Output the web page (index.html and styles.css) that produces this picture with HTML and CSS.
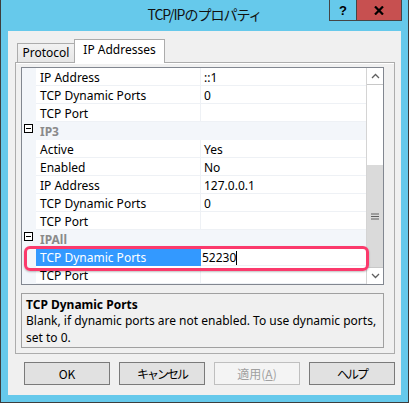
FILE: index.html
```html
<!DOCTYPE html>
<html>
<head>
<meta charset="utf-8">
<link rel="stylesheet" href="styles.css">
</head>
<body>
<div class="window">
  <div class="titlebar">
    <div class="title">TCP/IPのプロパティ</div>
    <div class="caption">
      <div class="cbtn help">?</div>
      <div class="cbtn close"><svg width="10" height="9" viewBox="0 0 10 9"><path d="M1 0.5 L9 8.5 M9 0.5 L1 8.5" stroke="#000" stroke-width="2.2" fill="none"/></svg></div>
    </div>
  </div>
  <div class="client">
    <div class="tabs">
      <div class="tab">Protocol</div>
      <div class="tab active">IP Addresses</div>
    </div>
    <div class="panel">
      <div class="grid">
        <div class="rows">
          <div class="row"><div class="m"></div><div class="n">IP Address</div><div class="v">::1</div></div>
          <div class="row"><div class="m"></div><div class="n">TCP Dynamic Ports</div><div class="v">0</div></div>
          <div class="row"><div class="m"></div><div class="n">TCP Port</div><div class="v"></div></div>
          <div class="row cat"><div class="m"><div class="box"></div></div><div class="n">IP3</div></div>
          <div class="row"><div class="m"></div><div class="n">Active</div><div class="v">Yes</div></div>
          <div class="row"><div class="m"></div><div class="n">Enabled</div><div class="v">No</div></div>
          <div class="row"><div class="m"></div><div class="n">IP Address</div><div class="v">127.0.0.1</div></div>
          <div class="row"><div class="m"></div><div class="n">TCP Dynamic Ports</div><div class="v">0</div></div>
          <div class="row"><div class="m"></div><div class="n">TCP Port</div><div class="v"></div></div>
          <div class="row cat"><div class="m"><div class="box"></div></div><div class="n">IPAll</div></div>
          <div class="row sel"><div class="m"></div><div class="n">TCP Dynamic Ports</div><div class="v">52230<span class="caret"></span></div></div>
          <div class="row"><div class="m"></div><div class="n">TCP Port</div><div class="v"></div></div>
        </div>
        <div class="sb">
          <div class="sbtn up"><svg width="9" height="6" viewBox="0 0 9 6"><path d="M1 5 L4.5 1.5 L8 5" stroke="#606060" stroke-width="1.3" fill="none"/></svg></div>
          <div class="track">
            <div class="thumb"><svg width="8" height="7" viewBox="0 0 8 7"><path d="M0 1 H8 M0 3.5 H8 M0 6 H8" stroke="#606060" stroke-width="1"/></svg></div>
          </div>
          <div class="sbtn down"><svg width="9" height="6" viewBox="0 0 9 6"><path d="M1 1 L4.5 4.5 L8 1" stroke="#606060" stroke-width="1.3" fill="none"/></svg></div>
        </div>
        <div class="annot"></div>
      </div>
      <div class="desc">
        <div class="dt">TCP Dynamic Ports</div>
        <div class="dd">Blank, if dynamic ports are not enabled. To use dynamic ports,</div>
        <div class="dd">set to 0.</div>
      </div>
    </div>
    <div class="btns">
      <div class="btn">OK</div>
      <div class="btn kana">キャンセル</div>
      <div class="btn disabled">適用(<u>A</u>)</div>
      <div class="btn kana">ヘルプ</div>
    </div>
  </div>
</div>
</body>
</html>
```

FILE: styles.css
```css
* { box-sizing: border-box; }
body { margin: 0; background: #fff; }

.window {
  width: 409px;
  height: 403px;
  background: #66c9eb;
  border: 1px solid #3d3d3d;
  border-top: none;
  padding: 0 7px 7px;
  display: flex;
  flex-direction: column;
  font-family: "Noto Sans", sans-serif;
  font-size: 12px;
  color: #000;
}

.titlebar {
  height: 31px;
  margin: 0 -7px;
  display: grid;
  grid-template-columns: 1fr auto 1fr;
  align-items: start;
  flex: none;
}
.title {
  grid-column: 2;
  font-family: "Noto Sans CJK JP", sans-serif;
  font-size: 14px;
  letter-spacing: -1px;
  line-height: 29px;
  color: #111;
}
.caption {
  grid-column: 3;
  justify-self: end;
  margin-right: 6px;
  display: flex;
  height: 21px;
  border: 1px solid #454545;
  border-top: none;
}
.cbtn {
  display: flex;
  align-items: center;
  justify-content: center;
}
.help {
  width: 27px;
  border-right: 1px solid #454545;
  font-family: "Liberation Sans", sans-serif;
  font-weight: bold;
  font-size: 13px;
}
.close {
  width: 44px;
  background: #c75050;
}

.client {
  flex: 1;
  background: #f0f0f0;
  display: flex;
  flex-direction: column;
}

.tabs {
  display: flex;
  align-items: flex-end;
  height: 23px;
  margin: 8px 0 0 9px;
  position: relative;
  z-index: 1;
  flex: none;
}
.tab {
  width: 58px;
  height: 19px;
  border: 1px solid #acacac;
  border-bottom: none;
  background: linear-gradient(#f2f2f2, #e6e6e6);
  text-align: center;
  line-height: 17px;
}
.tab.active {
  width: 91px;
  height: 24px;
  margin-left: -1px;
  margin-bottom: -1px;
  background: #fff;
  line-height: 20px;
}

.panel {
  height: 292px;
  margin: 0 6px 0 7px;
  border: 1px solid #acacac;
  box-shadow: inset 0 1px 0 #fff;
  padding: 4px 10px 5px 5px;
  display: flex;
  flex-direction: column;
  gap: 8px;
  flex: none;
}

.grid {
  height: 218px;
  border: 1px solid #828790;
  background: #fff;
  display: flex;
  position: relative;
  flex: none;
}
.rows {
  width: 344px;
  display: flex;
  flex-direction: column;
}
.row {
  display: flex;
  height: 18px;
}
.m {
  width: 14px;
  background: #f3f6fa;
  flex: none;
}
.n {
  width: 165px;
  padding: 2px 0 0 4px;
  line-height: 15px;
  border-right: 1px solid #eef1f5;
  border-bottom: 1px solid #eef1f5;
  white-space: nowrap;
  flex: none;
}
.v {
  width: 165px;
  padding: 2px 0 0 3px;
  line-height: 15px;
  border-bottom: 1px solid #eef1f5;
  white-space: nowrap;
  flex: none;
}
.cat { background: #f3f6fa; }
.cat .m {
  display: flex;
  padding: 2px 0 0 2px;
}
.box {
  width: 9px;
  height: 9px;
  border: 1px solid #000;
  background: #fff;
  display: flex;
  align-items: center;
  justify-content: center;
}
.box::before {
  content: "";
  width: 5px;
  height: 1px;
  background: #000;
}
.cat .n {
  width: 330px;
  border-right: none;
  border-bottom-color: #f3f6fa;
  font-weight: bold;
  color: #8a8a8a;
}
.sel .n {
  background: #3399ff;
  color: #fff;
  border-right-color: #3399ff;
  border-bottom-color: #3399ff;
}
.sel .v { padding-left: 1px; }
.caret {
  display: inline-block;
  width: 1px;
  height: 14px;
  background: #000;
  vertical-align: -3px;
}

.sb {
  width: 17px;
  border-left: 1px solid #d4d4d4;
  display: flex;
  flex-direction: column;
}
.sbtn {
  height: 17px;
  display: flex;
  align-items: center;
  justify-content: center;
  background: #fff;
  flex: none;
}
.up { border-bottom: 1px solid #c8c8c8; }
.down { border-top: 1px solid #c8c8c8; }
.track {
  flex: 1;
  display: flex;
  flex-direction: column;
  justify-content: flex-end;
}
.thumb {
  height: 102px;
  background: #dadada;
  display: flex;
  align-items: center;
  justify-content: center;
}

.annot {
  position: absolute;
  left: 2px;
  top: 178px;
  width: 345px;
  height: 25px;
  border: 3px solid #fb3a6c;
  border-radius: 6px;
  box-shadow: 0 1px 2px rgba(0,0,0,0.25);
}

.desc {
  height: 55px;
  border: 1px solid #a0a0a0;
  padding: 2px 4px 0;
  flex: none;
}
.dt {
  font-weight: bold;
  line-height: 17px;
}
.dd {
  line-height: 16.5px;
  white-space: nowrap;
}

.btns {
  display: flex;
  gap: 9px;
  margin: 8px 6px 0 16px;
  flex: none;
}
.btn {
  width: 86px;
  height: 23px;
  border: 1px solid #7a7a7a;
  background: #e1e1e1;
  display: flex;
  align-items: center;
  justify-content: center;
  font-family: "Noto Sans CJK JP", sans-serif;
  font-size: 12px;
}
.btn.kana { letter-spacing: -2px; }
.btn.disabled {
  border-color: #bfbfbf;
  background: #f4f4f4;
  color: #a0a0a0;
}
```
